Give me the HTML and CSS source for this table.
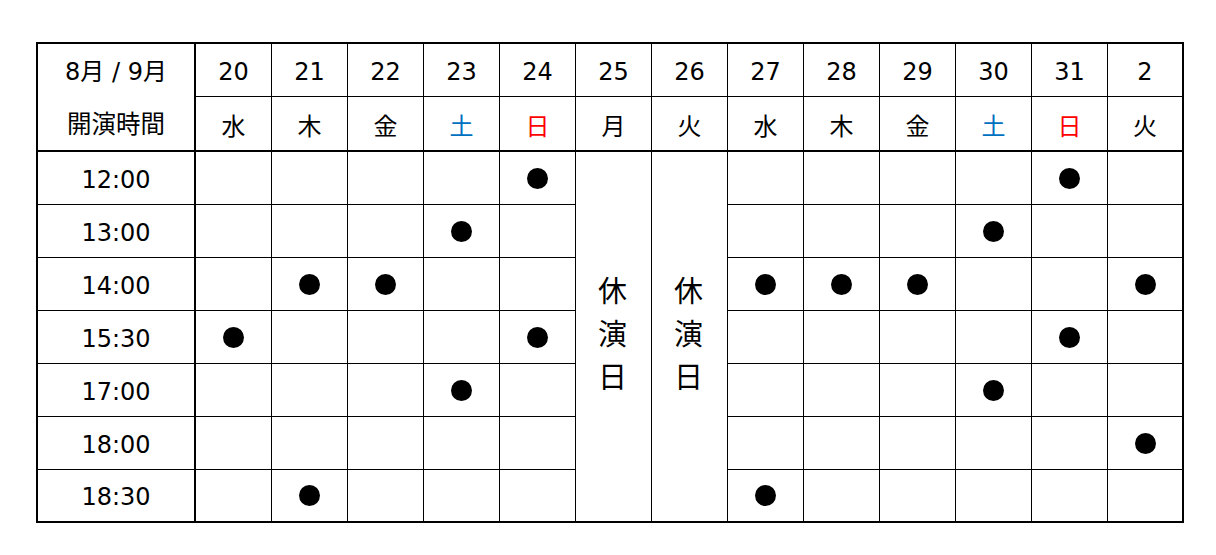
FILE: index.html
```html
<!DOCTYPE html>
<html lang="ja">
<head>
<meta charset="utf-8">
<title>公演スケジュール</title>
<link rel="stylesheet" href="styles.css">
</head>
<body>
<div class="sched">
  <div class="c corner"><span class="l1">8月 / 9月</span><span class="l2">開演時間</span></div>
  <div class="c rest r25"><span>休</span><span>演</span><span>日</span></div>
  <div class="c rest r26"><span>休</span><span>演</span><span>日</span></div>

  <div class="c">20</div><div class="c">21</div><div class="c">22</div><div class="c">23</div><div class="c">24</div><div class="c">25</div><div class="c">26</div><div class="c">27</div><div class="c">28</div><div class="c">29</div><div class="c">30</div><div class="c">31</div><div class="c lc">2</div>

  <div class="c h2">水</div><div class="c h2">木</div><div class="c h2">金</div><div class="c h2 sat">土</div><div class="c h2 sun">日</div><div class="c h2">月</div><div class="c h2">火</div><div class="c h2">水</div><div class="c h2">木</div><div class="c h2">金</div><div class="c h2 sat">土</div><div class="c h2 sun">日</div><div class="c h2 lc">火</div>

  <div class="c tc">12:00</div><div class="c"></div><div class="c"></div><div class="c"></div><div class="c"></div><div class="c"><i class="dot"></i></div><div class="c"></div><div class="c"></div><div class="c"></div><div class="c"></div><div class="c"><i class="dot"></i></div><div class="c lc"></div>

  <div class="c tc">13:00</div><div class="c"></div><div class="c"></div><div class="c"></div><div class="c"><i class="dot"></i></div><div class="c"></div><div class="c"></div><div class="c"></div><div class="c"></div><div class="c"><i class="dot"></i></div><div class="c"></div><div class="c lc"></div>

  <div class="c tc">14:00</div><div class="c"></div><div class="c"><i class="dot"></i></div><div class="c"><i class="dot"></i></div><div class="c"></div><div class="c"></div><div class="c"><i class="dot"></i></div><div class="c"><i class="dot"></i></div><div class="c"><i class="dot"></i></div><div class="c"></div><div class="c"></div><div class="c lc"><i class="dot"></i></div>

  <div class="c tc">15:30</div><div class="c"><i class="dot"></i></div><div class="c"></div><div class="c"></div><div class="c"></div><div class="c"><i class="dot"></i></div><div class="c"></div><div class="c"></div><div class="c"></div><div class="c"></div><div class="c"><i class="dot"></i></div><div class="c lc"></div>

  <div class="c tc">17:00</div><div class="c"></div><div class="c"></div><div class="c"></div><div class="c"><i class="dot"></i></div><div class="c"></div><div class="c"></div><div class="c"></div><div class="c"></div><div class="c"><i class="dot"></i></div><div class="c"></div><div class="c lc"></div>

  <div class="c tc">18:00</div><div class="c"></div><div class="c"></div><div class="c"></div><div class="c"></div><div class="c"></div><div class="c"></div><div class="c"></div><div class="c"></div><div class="c"></div><div class="c"></div><div class="c lc"><i class="dot"></i></div>

  <div class="c tc lr">18:30</div><div class="c lr"></div><div class="c lr"><i class="dot"></i></div><div class="c lr"></div><div class="c lr"></div><div class="c lr"></div><div class="c lr"><i class="dot"></i></div><div class="c lr"></div><div class="c lr"></div><div class="c lr"></div><div class="c lr"></div><div class="c lc lr"></div>
</div>
</body>
</html>
```

FILE: styles.css
```css
html, body {
  margin: 0;
  padding: 0;
  background: #fff;
}
body {
  padding: 42px 0 0 36px;
  font-family: "DejaVu Sans", "Noto Sans CJK JP", sans-serif;
  font-size: 24px;
  color: #000;
}
.sched {
  display: grid;
  grid-template-columns: 158px repeat(12, 76px) 74px;
  grid-template-rows: 53px 55px repeat(6, 53px) 51px;
  width: max-content;
  border: 2px solid #000;
}
.c {
  box-sizing: border-box;
  border-right: 1px solid #000;
  border-bottom: 1px solid #000;
  display: flex;
  align-items: center;
  justify-content: center;
  line-height: 1;
  padding-top: 3px;
}
.corner {
  grid-column: 1;
  grid-row: 1 / span 2;
  border-right-width: 2px;
  border-bottom-width: 2px;
  flex-direction: column;
  justify-content: flex-start;
  padding-top: 0;
}
.corner .l1,
.corner .l2 {
  height: 53px;
  display: flex;
  align-items: center;
  padding-top: 3px;
  box-sizing: border-box;
}
.corner .l2 {
  font-size: 24.5px;
}
.h2 {
  border-bottom-width: 2px;
  font-family: "Noto Sans CJK JP", sans-serif;
  font-size: 24px;
}
.sat { color: #0070C0; }
.sun { color: #FF0000; }
.tc {
  border-right-width: 2px;
}
.lc {
  border-right: none;
}
.lr {
  border-bottom: none;
}
.rest {
  grid-row: 3 / span 7;
  border-bottom: none;
  flex-direction: column;
  font-family: "Noto Sans CJK JP", sans-serif;
  font-size: 29px;
  line-height: 43px;
  padding-top: 0;
  padding-bottom: 8px;
  padding-right: 2px;
}
.r25 { grid-column: 7; }
.r26 { grid-column: 8; }
.dot {
  display: block;
  width: 21px;
  height: 21px;
  border-radius: 50%;
  background: #000;
  margin-top: -3px;
}
```
